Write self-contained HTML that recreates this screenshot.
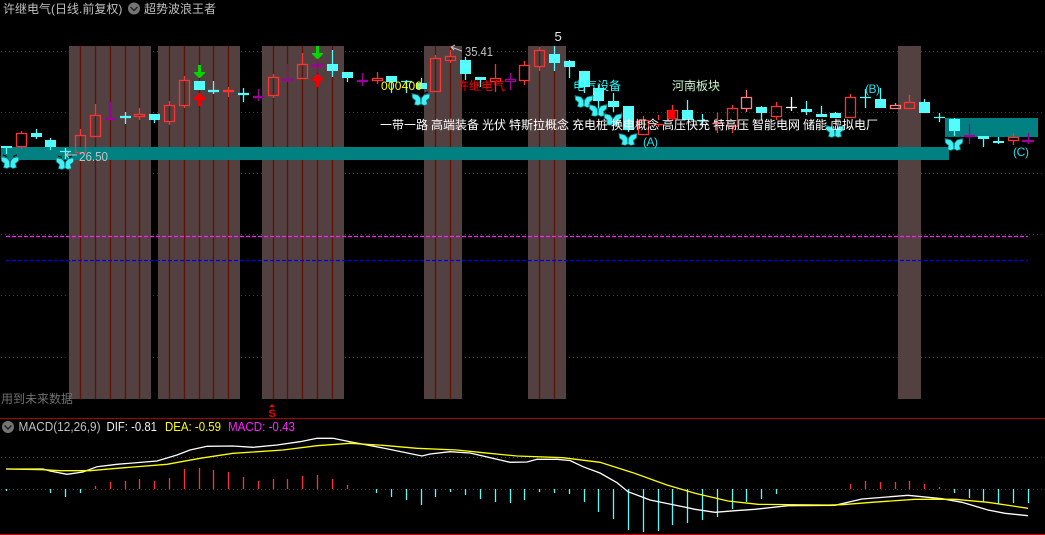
<!DOCTYPE html>
<html><head><meta charset="utf-8"><style>
html,body{margin:0;padding:0;background:#000;width:1045px;height:535px;overflow:hidden}
svg{display:block}
text{font-family:"Liberation Sans","WenQuanYi Zen Hei","Noto Sans CJK SC",sans-serif;font-size:12px}
.n{font-size:13px}
</style></head><body>
<svg width="1045" height="535" viewBox="0 0 1045 535" xmlns="http://www.w3.org/2000/svg">
<defs>
<g id="bf"><path d="M0 5L-.5-1-3-4-9-5.500-8.500-1-5.500 1.500-6.500 5.500-3 6.500ZM0 5L.5-1 3-4 9-5.500 8.500-1 5.500 1.500 6.500 5.500 3 6.500Z" fill="#40f0f2" stroke="#0a7478" stroke-width=".8"/><path d="M-7-7L-3-5.500M7-7L3-5.500" stroke="#000" fill="none"/></g>
</defs>
<g shape-rendering="crispEdges">
<path d="M1 51.500H1045M1 112.500H1045M1 173.500H1045M1 234.500H1045M1 295.500H1045M1 357.500H1045" stroke="#a01010" stroke-dasharray="1 3"/>
<path d="M69 46h82v353H69zM158 46h82v353H158zM262 46h82v353H262zM424 46h38v353H424zM528 46h38v353H528zM898 46h23v353H898z" fill="#534040"/>
</g>
<path d="M80.500 46V399M95.500 46V399M110.500 46V399M125.500 46V399M139.500 46V399M169.500 46V399M184.500 46V399M199.500 46V399M213.500 46V399M228.500 46V399M273.500 46V399M287.500 46V399M302.500 46V399M317.500 46V399M332.500 46V399M435.500 46V399M450.500 46V399M539.500 46V399M554.500 46V399" stroke="#5f1206" stroke-width="1.300"/>
<g shape-rendering="crispEdges">
<rect x="1" y="147" width="948" height="13" fill="#008080"/>
<rect x="945" y="118" width="93" height="19" fill="#008080"/>
</g>
<path d="M6 236.500H1028" stroke="#ff20ff" stroke-width="1.300" stroke-dasharray="4 2"/>
<path d="M6 260.500H1028" stroke="#0000e8" stroke-width="1.300" stroke-dasharray="4 2"/>

<!-- red candles -->
<g fill="none" stroke="#ff3232" stroke-width="1.300">
<path d="M21.500 131V133M21.500 146V149M16.500 133.500h10v13h-10z"/>
<path d="M80.500 129V135M75.500 135.500h10v17h-10z"/>
<path d="M95.500 104V115M90.500 115.500h10v21h-10z"/>
<path d="M139.500 108V114M139.500 117V120M134.500 114.500h10v2h-10z"/>
<path d="M169.500 101V105M169.500 121V125M164.500 105.500h10v16h-10z"/>
<path d="M184.500 76V80M184.500 106V108M179.500 80.500h10v25h-10z"/>
<path d="M228.500 87V97M223 90.500h11M223 91.500h11"/>
<path d="M273.500 74V77M273.500 96V98M268.500 77.500h10v18h-10z"/>
<path d="M302.500 53V64M297.500 64.500h10v14h-10z"/>
<path d="M377.500 72V78M377.500 81V84M372.500 78.500h10v2h-10z"/>
<path d="M435.500 55V58M430.500 58.500h10v33h-10z"/>
<path d="M450.500 50V56M450.500 61V63M445.500 56.500h10v4h-10z"/>
<path d="M495.500 64V78M495.500 82V92M490.500 78.500h10v3h-10z"/>
<path d="M524.500 61V65M524.500 81V85M519.500 65.500h10v15h-10z"/>
<path d="M539.500 47V50M539.500 67V71M534.500 50.500h10v16h-10z"/>
<path d="M643.500 116V120M638.500 120.500h10v14h-10z"/>
<path d="M658.500 115V120M658.500 124V127M653.500 124.500h10"/>
<path d="M672.500 105V110M672.500 119V120M667.500 110.500h10v8h-10z"/>
<path d="M717.500 113V133M712 123.500h11"/>
<path d="M732.500 105V108M732.500 127V133M727.500 108.500h10v18h-10z"/>
<path d="M776.500 102V106M776.500 117V120M771.500 106.500h10v10h-10z"/>
<path d="M850.500 94V97M845.500 97.500h10v20h-10z"/>
<path d="M909.500 95V102M904.500 102.500h10v6h-10z"/>
<path d="M1013.500 133V137M1013.500 141V145M1008.500 137.500h10v3h-10z"/>
</g>
<rect x="668" y="110" width="7" height="9" fill="#ff0000"/>
<!-- pink -->
<g fill="none" stroke="#ff8080" stroke-width="1.300">
<path d="M746.500 90V97M746.500 109V112M741.500 97.500h10v11h-10z"/>
<path d="M895.500 103V105M890.500 105.500h10v3h-10z"/>
</g>
<!-- white -->
<path d="M791.500 97V111M786 107.500h11" stroke="#fff" fill="none" stroke-width="1.300"/>
<!-- purple -->
<g fill="none" stroke="#a000a0" stroke-width="1.300">
<path d="M110.500 102V119M105 118.500h11M105 119.500h11"/>
<path d="M258.500 89V101M253 96.500h11M253 97.500h11"/>
<path d="M287.500 64V82M282.500 79.500h10v1h-10z"/>
<path d="M317.500 59V64M317.500 67V73M312.500 64.500h10v2h-10z"/>
<path d="M362.500 73V80M362.500 82V86M357.500 80.500h10v1h-10z"/>
<path d="M510.500 73V79M510.500 82V90M505.500 79.500h10v2h-10z"/>
<path d="M969.500 124V135M969.500 137V144M964.500 135.500h10v1h-10z"/>
<path d="M1028.500 133V144M1022 140.500h12M1022 141.500h12"/>
</g>
<!-- cyan wicks + bodies -->
<g fill="none" stroke="#54fcfc" stroke-width="1.300">
<path d="M6.500 146V154M36.500 129V139M50.500 138V150M65.500 148V159M125.500 112V124M154.500 114V123M199.500 81V90M213.500 81V94M243.500 88V102M332.500 50V77M347.500 72V82M391.500 76V93M406.500 80V93M421.500 78V89M465.500 57V80M480.500 77V87M554.500 46V71M569.500 60V78M584.500 71V93M598.500 85V110M613.500 93V112M628.500 106V132M687.500 100V120M702.500 114V127M761.500 106V120M806.500 101V115M821.500 106V117M835.500 112V118M865.500 89V108M880.500 88V108M924.500 99V113M939.500 113V122M954.500 118V136M983.500 136V147M998.500 137V144"/>
<path d="M60 151.500h11M120 117.500h11M120 116.500h11M208 90.500h11M208 91.500h11M238 93.500h11M238 94.500h11M401 81.500h11M697 120.500h11M860 97.500h11M934 117.500h11"/>
</g>
<g fill="#54fcfc">
<rect x="1" y="146" width="11" height="2"/>
<rect x="31" y="133" width="11" height="4"/>
<rect x="45" y="140" width="11" height="7"/>
<rect x="149" y="114" width="11" height="6"/>
<rect x="194" y="81" width="11" height="9"/>
<rect x="327" y="64" width="11" height="7"/>
<rect x="342" y="72" width="11" height="6"/>
<rect x="386" y="76" width="11" height="6"/>
<rect x="416" y="83" width="11" height="6"/>
<rect x="460" y="60" width="11" height="14"/>
<rect x="475" y="77" width="11" height="3"/>
<rect x="549" y="54" width="11" height="9"/>
<rect x="564" y="61" width="11" height="6"/>
<rect x="579" y="71" width="11" height="16"/>
<rect x="593" y="88" width="11" height="13"/>
<rect x="608" y="101" width="11" height="6"/>
<rect x="623" y="106" width="11" height="24"/>
<rect x="682" y="110" width="11" height="10"/>
<rect x="756" y="107" width="11" height="6"/>
<rect x="801" y="109" width="11" height="3"/>
<rect x="816" y="114" width="11" height="3"/>
<rect x="830" y="113" width="11" height="5"/>
<rect x="875" y="99" width="11" height="9"/>
<rect x="919" y="102" width="11" height="11"/>
<rect x="949" y="119" width="11" height="12"/>
<rect x="978" y="136" width="11" height="3"/>
<rect x="993" y="141" width="11" height="2"/>
</g>
<!-- arrows -->
<path d="M198 65h3v7h4v1l-5 5h-1l-5-5v-1h4z" fill="#00d800"/>
<path d="M316 46h3v7h4v1l-5 5h-1l-5-5v-1h4z" fill="#00d800"/>
<path d="M199 93h1l5 5v2h-4v6h-3v-6h-4v-2z" fill="#f00000"/>
<path d="M317 74h1l5 5v2h-4v6h-3v-6h-4v-2z" fill="#f00000"/>
<!-- MACD frame -->
<g shape-rendering="crispEdges">
<path d="M0 418.500H1045" stroke="#a80000"/>
<path d="M0 534.500H1045" stroke="#d00000"/>
<path d="M1 457.500H1045M1 489.500H1045" stroke="#a01010" stroke-dasharray="1 3"/>
</g>
<path d="M95.500 489V486M110.500 489V482M125.500 489V481M139.500 489V479M154.500 489V481M169.500 489V478M184.500 489V469M199.500 489V468M213.500 489V470M228.500 489V472M243.500 489V477M258.500 489V481M273.500 489V479M287.500 489V479M302.500 489V476M317.500 489V475M332.500 489V479M347.500 489V485M850.500 489V484M865.500 489V481M880.500 489V482M895.500 489V482M909.500 489V481M924.500 489V484M939.500 489V487" stroke="#ff3232" stroke-width="1.300"/>
<path d="M6.500 489V491M50.500 489V493M65.500 489V497M80.500 489V493M376.500 489V493M391.500 489V497M406.500 489V500M421.500 489V505M435.500 489V497M450.500 489V492M465.500 489V495M480.500 489V499M495.500 489V502M510.500 489V503M524.500 489V500M539.500 489V492M554.500 489V493M569.500 489V494M584.500 489V502M598.500 489V512M613.500 489V519M628.500 489V530M643.500 489V532M658.500 489V531M672.500 489V525M687.500 489V523M702.500 489V520M717.500 489V517M732.500 489V509M746.500 489V502M761.500 489V499M776.500 489V494M954.500 489V493M969.500 489V498M983.500 489V502M998.500 489V504M1013.500 489V503M1028.500 489V503" stroke="#54fcfc" stroke-width="1.300"/>
<polyline fill="none" stroke="#fff" stroke-width="1.300" points="6,469 43,469 50,471 67,474.300 83,472 97,466.700 117,464.300 157,461 177,455 190,450 207,446.300 233,446 253,447.300 277,445 300,441.700 317,438.300 333,438.300 350,441.700 383,448 422,456 430,454 450,451.700 470,453 510,462.300 527,462 537,459.300 557,459.300 570,460.500 583,466.700 600,473 617,482.700 628,491.700 650,500 683,506.700 695,509.300 715,512.300 735,510.700 755,509.300 788,505.700 835,505.300 862,499 908,495.300 942,498.700 962,502.300 988,510 1005,513.300 1028,515.700"/>
<polyline fill="none" stroke="#ffff00" stroke-width="1.300" points="7,469 43,469.700 60,470.700 90,470.700 117,468.300 167,464.300 200,458.300 233,453.300 283,450 317,445.700 350,443.300 383,445.300 417,448.300 457,450 483,452.700 517,456 563,457.700 600,462.300 633,472.700 667,485 695,493.300 728,501 758,504.300 828,505 842,504.700 872,502.300 915,499.300 955,499.300 988,502.300 1028,508.300"/>
<!-- butterflies -->
<use href="#bf" x="10" y="162"/><use href="#bf" x="65" y="163"/><use href="#bf" x="421" y="99"/><use href="#bf" x="584" y="101"/><use href="#bf" x="598" y="110"/><use href="#bf" x="613" y="119"/><use href="#bf" x="628" y="139"/><use href="#bf" x="835" y="131"/><use href="#bf" x="954" y="144"/>
<!-- header -->
<text x="3" y="13" fill="#c0c0c0">许继电气(日线.前复权)</text>
<circle cx="134" cy="8.500" r="6" fill="#757575"/><path d="M130.500 7l3.500 3.500 3.500-3.500" fill="none" stroke="#222" stroke-width="1.500"/>
<text x="144" y="13" fill="#c0c0c0">超势波浪王者</text>
<!-- price labels -->
<path d="M77 155H66M69 152l-3 3 3 3" fill="none" stroke="#c0c0c0"/>
<text class="n" x="79" y="161" fill="#c0c0c0" textLength="29" lengthAdjust="spacingAndGlyphs">26.50</text>
<path d="M462 51L451 47M455 45l-4 2 3 3" fill="none" stroke="#c0c0c0"/>
<text class="n" x="465" y="56" fill="#c0c0c0" textLength="28" lengthAdjust="spacingAndGlyphs">35.41</text>
<text class="n" x="554.500" y="41" fill="#e8e8e8">5</text>
<text x="381" y="90" fill="#ffff00" textLength="41">000400</text>
<text x="457" y="90" fill="#ff0000">许继电气</text>
<text x="573" y="90" fill="#20ffff">电气设备</text>
<text x="672" y="90" fill="#c8f4c8">河南板块</text>
<g fill="#fff">
<text x="380" y="129">一带一路</text><text x="431" y="129">高端装备</text><text x="482" y="129">光伏</text><text x="509" y="129">特斯拉概念</text><text x="572" y="129">充电桩</text><text x="611" y="129">换电概念</text><text x="662" y="129">高压快充</text><text x="713" y="129">特高压</text><text x="752" y="129">智能电网</text><text x="803" y="129">储能</text><text x="830" y="129">虚拟电厂</text>
</g>
<text x="643" y="146" fill="#20e0e8" textLength="15">(A)</text>
<text x="865" y="93" fill="#20e0e8" textLength="15">(B)</text>
<text x="1013" y="156" fill="#20e0e8" textLength="16">(C)</text>
<text x="1" y="403" fill="#707070">用到未来数据</text>
<path d="M272 404l3 3h-6z" fill="#f00000"/>
<text x="268.500" y="417" fill="#f00000" style="font-size:11px;font-weight:bold">S</text>
<!-- MACD legend -->
<circle cx="8" cy="427" r="6" fill="#757575"/><path d="M4.500 425.500l3.500 3.500 3.500-3.500" fill="none" stroke="#222" stroke-width="1.500"/>
<text class="n" x="18.500" y="431" fill="#c0c0c0" textLength="82" lengthAdjust="spacingAndGlyphs">MACD(12,26,9)</text>
<text class="n" x="106.500" y="431" fill="#f0f0f0" textLength="50.500" lengthAdjust="spacingAndGlyphs">DIF: -0.81</text>
<text class="n" x="165" y="431" fill="#ffff00" textLength="56" lengthAdjust="spacingAndGlyphs">DEA: -0.59</text>
<text class="n" x="228" y="431" fill="#ff20ff" textLength="67" lengthAdjust="spacingAndGlyphs">MACD: -0.43</text>
</svg>
</body></html>
